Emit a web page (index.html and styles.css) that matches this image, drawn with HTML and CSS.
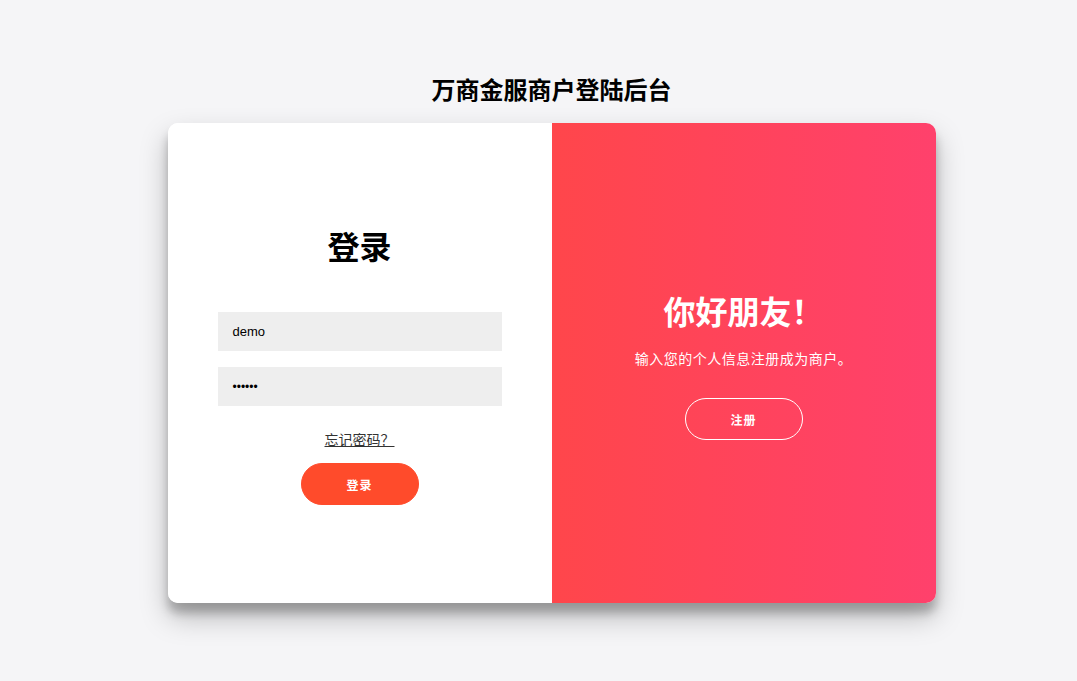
FILE: index.html
```html
<!DOCTYPE html>
<html lang="zh-CN">
<head>
<meta charset="utf-8">
<title>万商金服商户登陆后台</title>
<link rel="stylesheet" href="styles.css">
</head>
<body>
<div class="page">
  <h2 class="page-title">万商金服商户登陆后台</h2>
  <div class="card">
    <div class="panel panel-left">
      <h1 class="heading">登录</h1>
      <div class="field"><span class="field-text">demo</span></div>
      <div class="field"><span class="field-dots">••••••</span></div>
      <a class="forgot" href="#">忘记密码？</a>
      <button class="btn btn-solid">登录</button>
    </div>
    <div class="panel panel-right">
      <h1 class="heading heading-light">你好朋友！</h1>
      <p class="lead">输入您的个人信息注册成为商户。</p>
      <button class="btn btn-ghost">注册</button>
    </div>
  </div>
</div>
</body>
</html>
```
FILE: styles.css
```css
* { box-sizing: border-box; }
html, body { margin: 0; padding: 0; }
body {
  background: #f5f5f7;
  font-family: "Liberation Sans", "Noto Sans CJK SC", sans-serif;
  color: #000;
  min-height: 681px;
}
.page {
  display: flex;
  flex-direction: column;
  align-items: center;
  padding: 73px 0 60px 26px;
}
.page-title {
  margin: 0 0 18px;
  font-size: 24px;
  line-height: 32px;
  font-weight: 700;
  font-family: "Noto Sans CJK SC", sans-serif;
}
.card {
  width: 768px;
  height: 480px;
  display: flex;
  background: #fff;
  border-radius: 10px;
  overflow: hidden;
  box-shadow: 0 14px 28px rgba(0,0,0,0.25), 0 10px 10px rgba(0,0,0,0.22);
}
.panel {
  width: 384px;
  display: flex;
  flex-direction: column;
  align-items: center;
  text-align: center;
}
.panel-left {
  padding: 102px 50px 0;
  background: #fff;
}
.panel-right {
  padding: 167px 40px 0;
  background: linear-gradient(to right, #ff464b, #ff416c);
  color: #fff;
}
.heading {
  margin: 0;
  font-size: 32px;
  line-height: 40px;
  font-weight: 700;
  font-family: "Noto Sans CJK SC", sans-serif;
}
.heading-light { color: #fff; }
.field {
  width: 100%;
  height: 39px;
  background: #eee;
  padding: 0 15px;
  display: flex;
  align-items: center;
  font-size: 13px;
  color: #000;
}
.panel-left .heading { margin-bottom: 47px; }
.field + .field { margin-top: 16px; }
.field-dots { font-size: 12px; letter-spacing: 0; }
.forgot {
  margin: 23px 0 14px;
  font-size: 14px;
  line-height: 20px;
  color: #333;
  text-decoration: underline;
  font-family: "Noto Sans CJK SC", sans-serif;
}
.btn {
  width: 118px;
  height: 42px;
  border-radius: 21px;
  font-size: 12px;
  font-weight: 700;
  letter-spacing: 1px;
  color: #fff;
  font-family: "Noto Sans CJK SC", sans-serif;
  padding: 0;
  cursor: pointer;
}
.btn-solid {
  background: #ff4b2b;
  border: 1px solid #ff4b2b;
}
.btn-ghost {
  background: transparent;
  border: 1px solid #fff;
}
.lead {
  margin: 18px 0 30px;
  font-size: 14px;
  line-height: 20px;
  letter-spacing: 0.5px;
  font-family: "Noto Sans CJK SC", sans-serif;
}
```
